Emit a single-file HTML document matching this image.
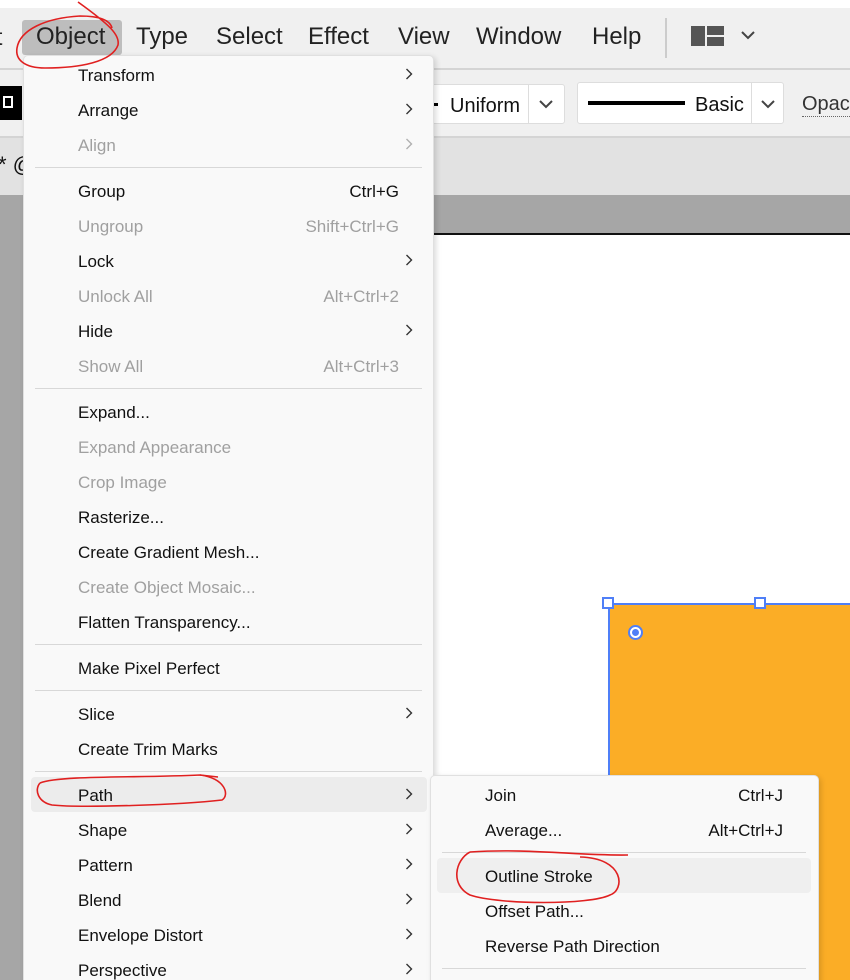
<!DOCTYPE html>
<html><head><style>
*{margin:0;padding:0;box-sizing:border-box}
html{width:850px;height:980px;overflow:hidden}
body{width:850px;height:980px;overflow:hidden;position:relative;background:#fff;font-family:"Liberation Sans",sans-serif;color:#111}
.a{position:absolute}
.mi{position:absolute;left:78px;font-size:17px;line-height:20px;white-space:nowrap}
.dis{color:#a0a0a0}
.sc{position:absolute;font-size:17px;line-height:20px;text-align:right;white-space:nowrap}
.ar{position:absolute;width:8px;height:12px}
.sep{position:absolute;height:1px;background:#d8d8d8}
.mb{position:absolute;top:24px;font-size:23px;line-height:26px;color:#222}
</style></head><body>
<svg width="0" height="0" style="position:absolute"><defs><symbol id="chev" viewBox="0 0 8 12"><path d="M1.5 1l5 5-5 5" stroke="#333" stroke-width="1.4" fill="none"/></symbol><symbol id="chevd" viewBox="0 0 8 12"><path d="M1.5 1l5 5-5 5" stroke="#b0b0b0" stroke-width="1.4" fill="none"/></symbol></defs></svg>
<div class="a" style="left:0;top:0;width:850px;height:8px;background:#fff"></div>
<div class="a" style="left:0;top:8px;width:850px;height:60px;background:#f0f0f0"></div>
<div class="a" style="left:0;top:68px;width:850px;height:2px;background:#d4d4d4"></div>
<div class="a" style="left:0;top:70px;width:850px;height:66px;background:#f0f0f0"></div>
<div class="a" style="left:0;top:136px;width:850px;height:2px;background:#d4d4d4"></div>
<div class="a" style="left:0;top:138px;width:850px;height:57px;background:#e2e2e2"></div>
<div class="a" style="left:0;top:195px;width:850px;height:785px;background:#a6a6a6"></div>
<div class="a" style="left:434px;top:233px;width:416px;height:747px;background:#fff;border-top:2px solid #111"></div>
<div class="mb" style="left:-4px">t</div>
<div class="a" style="left:22px;top:20px;height:35px;background:#bdbdbd;border-radius:3px;width:100px"></div>
<div class="mb" style="left:36px;font-size:24px">Object</div>
<div class="mb" style="left:136px;font-size:24px">Type</div>
<div class="mb" style="left:216px;font-size:24px">Select</div>
<div class="mb" style="left:308px;font-size:24px">Effect</div>
<div class="mb" style="left:398px;font-size:24px">View</div>
<div class="mb" style="left:476px;font-size:24px">Window</div>
<div class="mb" style="left:592px;font-size:24px">Help</div>
<div class="a" style="left:665px;top:18px;width:2px;height:40px;background:#ccc"></div>
<div class="a" style="left:691px;top:26px;width:14px;height:20px;background:#555"></div>
<div class="a" style="left:707px;top:26px;width:17px;height:9px;background:#555"></div>
<div class="a" style="left:707px;top:37px;width:17px;height:9px;background:#555"></div>
<svg class="a" style="left:740px;top:30px" width="16" height="10"><path d="M2 2l6 6 6-6" stroke="#444" stroke-width="2" fill="none"/></svg>
<div class="a" style="left:0;top:86px;width:22px;height:34px;background:#000"></div>
<div class="a" style="left:3px;top:96px;width:10px;height:12px;border:2px solid #fff"></div>
<div class="a" style="left:420px;top:84px;width:145px;height:40px;background:#fff;border:1px solid #ddd;border-radius:3px"></div>
<div class="a" style="left:528px;top:84px;width:1px;height:40px;background:#ddd"></div>
<div class="a" style="left:430px;top:103px;width:8px;height:3px;background:#000"></div>
<div class="a" style="left:450px;top:94px;font-size:20px;line-height:24px">Uniform</div>
<svg class="a" style="left:538px;top:99px" width="16" height="10"><path d="M2 2l6 6 6-6" stroke="#444" stroke-width="2" fill="none"/></svg>
<div class="a" style="left:577px;top:82px;width:207px;height:42px;background:#fff;border:1px solid #ddd;border-radius:3px"></div>
<div class="a" style="left:751px;top:82px;width:1px;height:42px;background:#ddd"></div>
<div class="a" style="left:588px;top:101px;width:97px;height:4px;background:#000"></div>
<div class="a" style="left:695px;top:93px;font-size:20px;line-height:24px">Basic</div>
<svg class="a" style="left:760px;top:99px" width="16" height="10"><path d="M2 2l6 6 6-6" stroke="#444" stroke-width="2" fill="none"/></svg>
<div class="a" style="left:802px;top:92px;font-size:20px;line-height:24px;color:#333;border-bottom:1px dotted #666">Opacity</div>
<div class="a" style="left:-2px;top:152px;font-size:22px;line-height:26px">* @</div>
<div class="a" style="left:608px;top:603px;width:250px;height:400px;background:#fbad26;border:2px solid #4f7ff7"></div>
<div class="a" style="left:602px;top:597px;width:12px;height:12px;background:#fff;border:2px solid #4f7ff7"></div>
<div class="a" style="left:754px;top:597px;width:12px;height:12px;background:#fff;border:2px solid #4f7ff7"></div>
<div class="a" style="left:628px;top:625px;width:15px;height:15px;border-radius:50%;background:#fff;border:2px solid #4f7ff7"></div>
<div class="a" style="left:632px;top:629px;width:7px;height:7px;border-radius:50%;background:#4f7ff7"></div>
<div class="a" style="left:23px;top:55px;width:411px;height:940px;background:#f9f9f9;border:1px solid #e0e0e0;border-radius:5px;box-shadow:2px 2px 6px rgba(0,0,0,.15)"></div>
<div class="a" style="left:31px;top:777px;width:396px;height:35px;background:#ececec;border-radius:4px"></div>
<div class="sep" style="left:35px;top:167px;width:387px"></div>
<div class="sep" style="left:35px;top:388px;width:387px"></div>
<div class="sep" style="left:35px;top:644px;width:387px"></div>
<div class="sep" style="left:35px;top:690px;width:387px"></div>
<div class="sep" style="left:35px;top:771px;width:387px"></div>

<div class="mi" style="top:66px">Transform</div><svg class="ar" style="left:405px;top:68px"><use href="#chev"/></svg>
<div class="mi" style="top:101px">Arrange</div><svg class="ar" style="left:405px;top:103px"><use href="#chev"/></svg>
<div class="mi dis" style="top:136px">Align</div><svg class="ar" style="left:405px;top:138px"><use href="#chevd"/></svg>
<div class="mi" style="top:182px">Group</div><div class="sc" style="right:451px;top:182px">Ctrl+G</div>
<div class="mi dis" style="top:217px">Ungroup</div><div class="sc dis" style="right:451px;top:217px">Shift+Ctrl+G</div>
<div class="mi" style="top:252px">Lock</div><svg class="ar" style="left:405px;top:254px"><use href="#chev"/></svg>
<div class="mi dis" style="top:287px">Unlock All</div><div class="sc dis" style="right:451px;top:287px">Alt+Ctrl+2</div>
<div class="mi" style="top:322px">Hide</div><svg class="ar" style="left:405px;top:324px"><use href="#chev"/></svg>
<div class="mi dis" style="top:357px">Show All</div><div class="sc dis" style="right:451px;top:357px">Alt+Ctrl+3</div>
<div class="mi" style="top:403px">Expand...</div>
<div class="mi dis" style="top:438px">Expand Appearance</div>
<div class="mi dis" style="top:473px">Crop Image</div>
<div class="mi" style="top:508px">Rasterize...</div>
<div class="mi" style="top:543px">Create Gradient Mesh...</div>
<div class="mi dis" style="top:578px">Create Object Mosaic...</div>
<div class="mi" style="top:613px">Flatten Transparency...</div>
<div class="mi" style="top:659px">Make Pixel Perfect</div>
<div class="mi" style="top:705px">Slice</div><svg class="ar" style="left:405px;top:707px"><use href="#chev"/></svg>
<div class="mi" style="top:740px">Create Trim Marks</div>
<div class="mi" style="top:786px">Path</div><svg class="ar" style="left:405px;top:788px"><use href="#chev"/></svg>
<div class="mi" style="top:821px">Shape</div><svg class="ar" style="left:405px;top:823px"><use href="#chev"/></svg>
<div class="mi" style="top:856px">Pattern</div><svg class="ar" style="left:405px;top:858px"><use href="#chev"/></svg>
<div class="mi" style="top:891px">Blend</div><svg class="ar" style="left:405px;top:893px"><use href="#chev"/></svg>
<div class="mi" style="top:926px">Envelope Distort</div><svg class="ar" style="left:405px;top:928px"><use href="#chev"/></svg>
<div class="mi" style="top:961px">Perspective</div><svg class="ar" style="left:405px;top:963px"><use href="#chev"/></svg>
<div class="a" style="left:430px;top:775px;width:389px;height:230px;background:#f9f9f9;border:1px solid #e0e0e0;border-radius:5px;box-shadow:2px 2px 6px rgba(0,0,0,.15)"></div>
<div class="a" style="left:437px;top:858px;width:374px;height:35px;background:#efefef;border-radius:4px"></div>
<div class="sep" style="left:442px;top:852px;width:364px"></div>
<div class="sep" style="left:442px;top:968px;width:364px"></div>
<div class="mi" style="left:485px;top:786px">Join</div><div class="sc" style="right:67px;top:786px">Ctrl+J</div>
<div class="mi" style="left:485px;top:821px">Average...</div><div class="sc" style="right:67px;top:821px">Alt+Ctrl+J</div>
<div class="mi" style="left:485px;top:867px">Outline Stroke</div>
<div class="mi" style="left:485px;top:902px">Offset Path...</div>
<div class="mi" style="left:485px;top:937px">Reverse Path Direction</div>
<svg class="a" style="left:0;top:0" width="850" height="980">
<g stroke="#e02020" stroke-width="1.6" fill="none">
<path d="M78 2C110 25 120 35 118 45C112 62 80 68 45 68C25 68 15 60 17 48C20 30 45 18 80 16C100 16 110 20 112 28"/>
<path d="M40 783C60 775 140 778 200 775C225 778 230 795 222 800C180 805 80 808 52 805C38 802 34 790 40 783"/>
<path d="M200 775L218 777"/>
<path d="M470 852C530 848 580 856 628 855M580 857C625 858 625 890 610 895C590 905 500 905 470 895C450 885 455 860 470 852"/>
</g>
</svg>
</body></html>
